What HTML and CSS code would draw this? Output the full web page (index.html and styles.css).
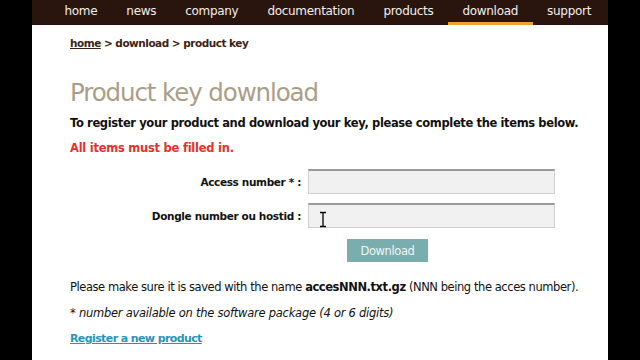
FILE: index.html
```html
<!DOCTYPE html>
<html>
<head>
<meta charset="utf-8">
<link rel="stylesheet" href="styles.css">
</head>
<body>
<div class="page">
  <nav class="nav">
    <a class="nav-item">home</a>
    <a class="nav-item">news</a>
    <a class="nav-item">company</a>
    <a class="nav-item">documentation</a>
    <a class="nav-item">products</a>
    <a class="nav-item active">download</a>
    <a class="nav-item">support</a>
  </nav>
  <main class="content">
    <div class="crumbs"><a class="crumb-link">home</a> &gt; download &gt; product key</div>
    <h1 class="title">Product key download</h1>
    <p class="intro">To register your product and download your key, please complete the items below.</p>
    <p class="warn">All items must be filled in.</p>
    <form class="form">
      <label class="label">Access number * :</label>
      <div class="field"><input class="input" type="text"></div>
      <label class="label">Dongle number ou hostid :</label>
      <div class="field">
        <input class="input" type="text">
        <svg class="cursor" width="8" height="17" viewBox="0 0 8 17"><path d="M1 1.5h2.2l0.8 0.8 0.8-0.8H7M4 2.3v12.4M1 15.5h2.2l0.8-0.8 0.8 0.8H7" fill="none" stroke="#000" stroke-width="1.3"/></svg>
      </div>
      <div></div>
      <div class="actions"><button class="btn" type="button">Download</button></div>
    </form>
    <p class="note">Please make sure it is saved with the name <b>accesNNN.txt.gz</b> (NNN being the acces number).</p>
    <p class="hint">* <i>number available on the software package (4 or 6 digits)</i></p>
    <p class="reg"><a class="reg-link">Register a new product</a></p>
  </main>
</div>
</body>
</html>
```
FILE: styles.css
```css
html, body {
  margin: 0;
  padding: 0;
  background: #000;
}
.page {
  width: 576px;
  height: 360px;
  margin: 0 auto;
  background: #fff;
  overflow: hidden;
  font-family: "DejaVu Sans", Verdana, sans-serif;
}
.nav {
  display: flex;
  height: 25px;
  background: #2a140e;
  padding-left: 18px;
}
.nav-item {
  display: block;
  padding: 0 14.5px;
  height: 22px;
  line-height: 23px;
  color: #f4efe9;
  font-size: 12px;
  letter-spacing: -0.3px;
  border-bottom: 3px solid transparent;
}
.nav-item.active {
  border-bottom-color: #f0a02c;
}
.content {
  padding: 11px 0 0 38px;
}
.crumbs {
  font-size: 10.5px;
  font-weight: bold;
  color: #3c2318;
  letter-spacing: -0.5px;
  line-height: 14px;
}
.crumb-link {
  color: #3c2318;
  text-decoration: underline;
}
.title {
  margin: 28px 0 0;
  font-size: 24.5px;
  font-weight: normal;
  color: #aa9e89;
  line-height: 30px;
  letter-spacing: -1.1px;
}
.intro {
  margin: 8px 0 0;
  font-size: 11.5px;
  font-weight: bold;
  color: #111;
  line-height: 14px;
  letter-spacing: -0.37px;
}
.warn {
  margin: 11px 0 0;
  font-size: 11.5px;
  font-weight: bold;
  color: #e4322b;
  line-height: 14px;
  letter-spacing: -0.25px;
}
.form {
  display: grid;
  grid-template-columns: 231px 247px;
  column-gap: 7px;
  row-gap: 9px;
  margin-top: 14px;
  align-items: center;
}
.label {
  text-align: right;
  font-size: 10.5px;
  font-weight: bold;
  color: #111;
  letter-spacing: -0.35px;
}
.field {
  position: relative;
}
.input {
  display: block;
  box-sizing: border-box;
  width: 247px;
  height: 25px;
  margin: 0;
  background: #f1f1f1;
  border: 1px solid #cfcfcf;
  border-top: 2px solid #9a9a9a;
}
.cursor {
  position: absolute;
  left: 11px;
  top: 8px;
}
.actions {
  padding-left: 39px;
  padding-top: 2px;
}
.btn {
  display: block;
  width: 81px;
  height: 23px;
  padding: 0;
  border: none;
  background: #7aadad;
  color: #eef6f6;
  font-family: "DejaVu Sans", Verdana, sans-serif;
  font-size: 11.5px;
  letter-spacing: -0.4px;
}
.note {
  margin: 18px 0 0;
  font-size: 11.5px;
  color: #111;
  line-height: 14px;
  letter-spacing: -0.43px;
}
.hint {
  margin: 12px 0 0;
  font-size: 11.5px;
  color: #111;
  line-height: 14px;
  letter-spacing: -0.25px;
}
.reg {
  margin: 12px 0 0;
  font-size: 11px;
  line-height: 14px;
  font-weight: bold;
  letter-spacing: -0.6px;
}
.reg-link {
  color: #2596b8;
  text-decoration: underline;
}
```
